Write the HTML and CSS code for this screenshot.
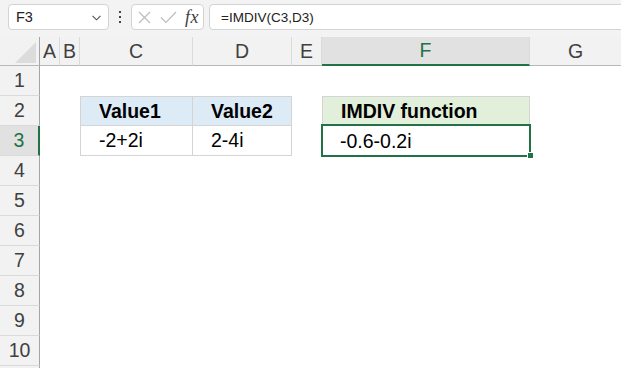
FILE: index.html
```html
<!DOCTYPE html>
<html lang="en">
<head>
  <meta charset="UTF-8">
  <title>IMDIV function</title>
  <link rel="stylesheet" href="styles.css">
</head>
<body>

<div class="toolbar">
  <div class="namebox">
    <span>F3</span>
    <svg class="chev" width="9" height="6" viewBox="0 0 9 6"><path d="M0.5 0.8 L4.5 4.8 L8.5 0.8" fill="none" stroke="#505050" stroke-width="1.1"/></svg>
  </div>
  <div class="dots"><i></i><i></i><i></i></div>
  <div class="fxbox">
    <svg width="13" height="13" viewBox="0 0 13 13"><path d="M1 1 L12 12 M12 1 L1 12" stroke="#bdbdbd" stroke-width="1.2" fill="none"/></svg>
    <svg width="17" height="13" viewBox="0 0 17 13"><path d="M1 6.5 L6 11.5 L16 1" stroke="#bdbdbd" stroke-width="1.2" fill="none"/></svg>
    <span class="fx">fx</span>
  </div>
  <div class="formula">=IMDIV(C3,D3)</div>
</div>

<div class="sheet">
  <div class="row head">
    <div class="corner"><span class="tri"></span></div>
    <div class="col">A</div>
    <div class="col">B</div>
    <div class="col">C</div>
    <div class="col">D</div>
    <div class="col">E</div>
    <div class="col sel">F</div>
    <div class="col last">G</div>
  </div>

  <div class="row">
    <div class="rh">1</div><div></div><div></div><div></div><div></div><div></div><div></div><div></div>
  </div>
  <div class="row">
    <div class="rh">2</div><div></div><div></div>
    <div class="cell tb l t blue">Value1</div>
    <div class="cell tb t blue">Value2</div>
    <div></div>
    <div class="cell tb l t green">IMDIV function</div>
    <div></div>
  </div>
  <div class="row">
    <div class="rh sel">3</div><div></div><div></div>
    <div class="cell tb l">-2+2i</div>
    <div class="cell tb">2-4i</div>
    <div></div>
    <div class="cell active">-0.6-0.2i<span class="frame"></span><span class="handle"></span></div>
    <div></div>
  </div>
  <div class="row"><div class="rh">4</div></div>
  <div class="row"><div class="rh">5</div></div>
  <div class="row"><div class="rh">6</div></div>
  <div class="row"><div class="rh">7</div></div>
  <div class="row"><div class="rh">8</div></div>
  <div class="row"><div class="rh">9</div></div>
  <div class="row"><div class="rh">10</div></div>
  <div class="row"><div class="rh"></div></div>
</div>

</body>
</html>
```

FILE: styles.css
```css
body {
  margin: 0;
  width: 621px;
  height: 368px;
  overflow: hidden;
  background: #fff;
  font-family: "Liberation Sans", Arial, sans-serif;
}

.toolbar {
  height: 37px;
  box-sizing: border-box;
  padding: 4px 0 0 8px;
  background: #f3f3f3;
  display: flex;
  align-items: flex-start;
  color: #222;
}

.namebox,
.fxbox,
.formula {
  height: 26px;
  box-sizing: border-box;
  background: #fff;
  border: 1px solid #d3d3d3;
  border-radius: 4px;
  display: flex;
  align-items: center;
}

.namebox {
  width: 101px;
  padding: 0 7px 0 7px;
  justify-content: space-between;
  font-size: 14.5px;
}

.chev {
  margin-top: 1px;
}

.dots {
  width: 22px;
  height: 26px;
  display: flex;
  flex-direction: column;
  align-items: center;
  justify-content: center;
  gap: 3px;
}

.dots i {
  width: 2px;
  height: 2px;
  background: #444;
}

.fxbox {
  width: 73px;
  padding-left: 6px;
  gap: 9px;
}

.fx {
  font-family: "Liberation Serif", "Times New Roman", serif;
  font-style: italic;
  font-size: 18px;
  color: #404040;
  margin-left: -1px;
  letter-spacing: 0.5px;
}

.formula {
  flex: 1;
  margin-left: 5px;
  margin-right: -10px;
  padding-left: 11px;
  font-size: 13.5px;
}

/* grid */
.sheet {
  font-size: 19.5px;
}

.row {
  display: grid;
  grid-template-columns: 40px 20px 20px 113px 99px 30px 208px 1fr;
  height: 30px;
}

.row.head {
  height: 29px;
  background: #f2f2f2;
}

.corner {
  position: relative;
  border-right: 1px solid #a5a5a5;
  border-bottom: 1px solid #b8b8b8;
}

.tri {
  position: absolute;
  right: 3px;
  bottom: 2px;
  width: 0;
  height: 0;
  border-left: 21px solid transparent;
  border-bottom: 21px solid #dcdcdc;
}

.col {
  display: flex;
  align-items: center;
  justify-content: center;
  color: #404040;
  border-right: 1px solid #dadada;
  border-bottom: 1px solid #b8b8b8;
}

.col.last {
  border-right: none;
}

.col.sel {
  background: #e1e1e1;
  color: #217346;
  border-bottom: 2px solid #217346;
}

.rh {
  display: flex;
  align-items: center;
  justify-content: center;
  background: #f2f2f2;
  color: #404040;
  border-right: 1px solid #a5a5a5;
  border-bottom: 1px solid #dadada;
}

.rh.sel {
  background: #e1e1e1;
  color: #217346;
  border-right: 2px solid #217346;
}

.cell {
  display: flex;
  align-items: center;
  padding-left: 18px;
  color: #000;
}

.tb {
  border-right: 1px solid #d4d4d4;
  border-bottom: 1px solid #d4d4d4;
}

.tb.l {
  border-left: 1px solid #d4d4d4;
}

.tb.t {
  border-top: 1px solid #d4d4d4;
}

.blue {
  background: #ddebf7;
  font-weight: bold;
}

.green {
  background: #e2efda;
  font-weight: bold;
}

.active {
  position: relative;
}

.frame {
  position: absolute;
  top: -2px;
  left: -1px;
  right: -1px;
  bottom: -1px;
  border: 2px solid #217346;
  z-index: 2;
}

.handle {
  position: absolute;
  right: -4px;
  bottom: -3px;
  width: 5px;
  height: 5px;
  background: #217346;
  border: 1px solid #fff;
  z-index: 3;
}
```
